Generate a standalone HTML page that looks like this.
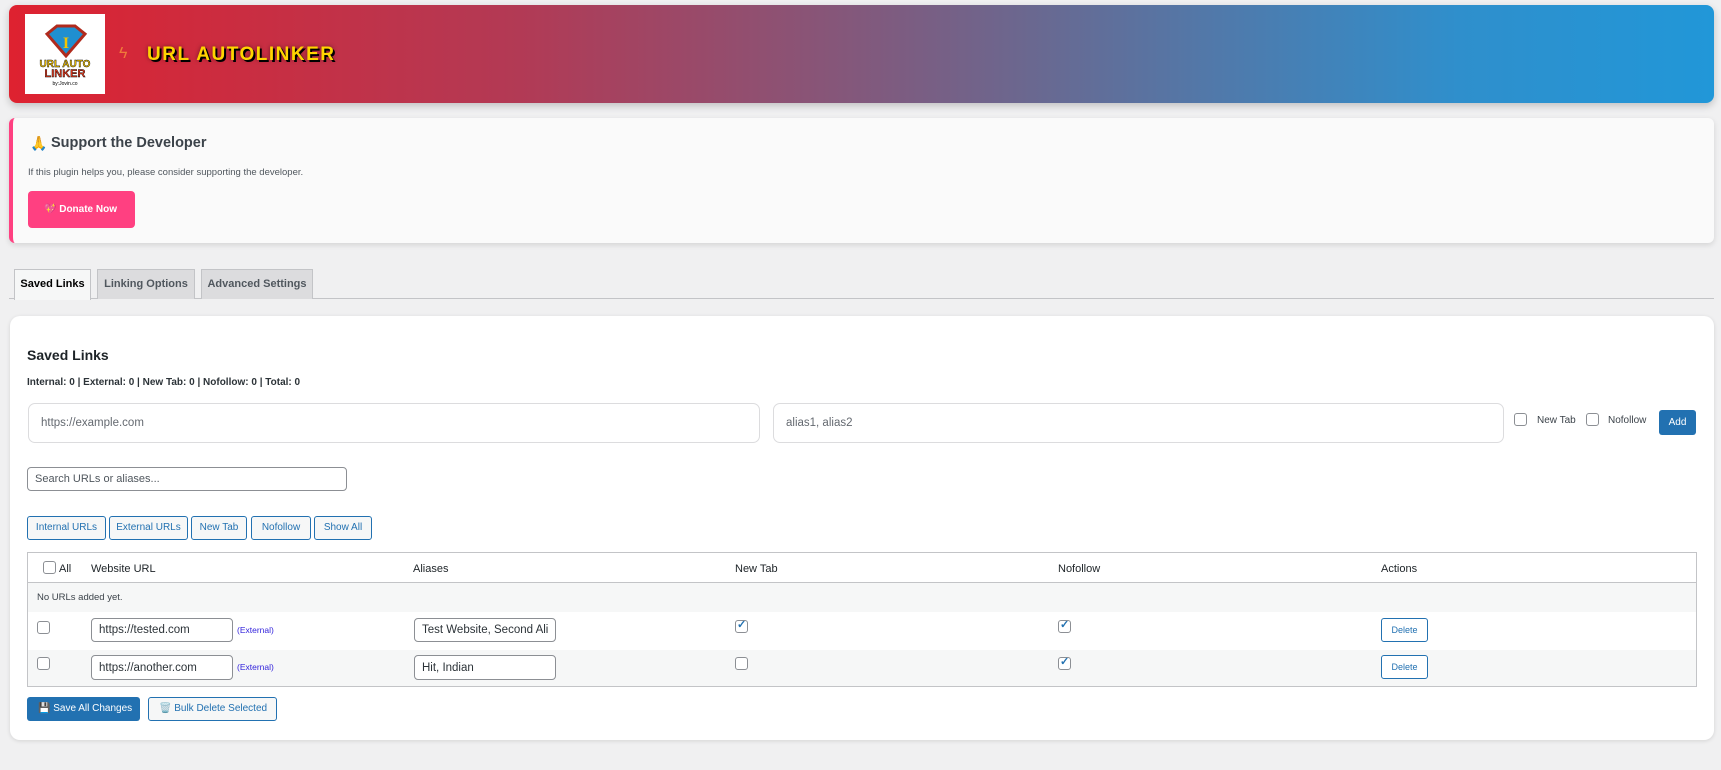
<!DOCTYPE html>
<html><head><meta charset="utf-8"><style>
*{box-sizing:border-box;margin:0;padding:0}
body{width:1721px;height:770px;background:#f0f0f1;font-family:"Liberation Sans",sans-serif;color:#1d2327;position:relative;overflow:hidden;font-size:11px}
.abs{position:absolute}
.hdr{left:9px;top:5px;width:1705px;height:98px;border-radius:8px;background:linear-gradient(90deg,#de2230 0%,#b23a55 30%,#6a6890 60%,#2f8fcc 85%,#2197d8 100%);box-shadow:0 3px 8px rgba(0,0,0,.2)}
.logo{left:25px;top:14px;width:80px;height:80px;background:#fff}
.title{left:147px;top:44px;font-size:19px;font-weight:900;color:#ffd400;letter-spacing:1.5px;text-shadow:2px 2px 0 #000,0 0 4px rgba(0,0,0,.5)}
.card{background:#fafafa;border-radius:6px;box-shadow:0 2px 6px rgba(0,0,0,.12)}
input.t{position:absolute;border:1px solid #8c8f94;border-radius:4px;background:#fff;font:11.5px "Liberation Sans",sans-serif;padding:0 7px;color:#2c3338}
.cb{position:absolute;width:13px;height:13px;border:1px solid #8c8f94;border-radius:3px;background:#fff}
.cb.on::after{content:"✓";position:absolute;left:1px;top:-3px;color:#2271b1;font-size:11px;font-weight:bold}
.fb{position:absolute;top:516px;height:24px;border:1px solid #2271b1;border-radius:3px;background:#f6f7f7;color:#2271b1;font-size:10px;text-align:center;line-height:22px}
.th{position:absolute;top:563px;font-size:11px;color:#1d2327}
.ext{position:absolute;font-size:8.5px;color:#2f1fdb}
.del{position:absolute;left:1381px;width:47px;height:24px;border:1px solid #2271b1;border-radius:3px;background:#fff;color:#2271b1;font-size:9px;text-align:center;line-height:22px}
.tab{position:absolute;top:269px;height:30px;border:1px solid #c3c4c7;border-bottom:none;font-size:11px;font-weight:bold;line-height:28px;text-align:center}
</style></head><body>
<div class="abs hdr"></div>
<div class="abs logo">
<svg width="80" height="80" viewBox="0 0 80 80"><path d="M22 20 L32 12 H50 L60 20 L41 42 Z" fill="#1f8fd0" stroke="#b02a1d" stroke-width="3"/><text x="41" y="34" font-size="16" font-weight="900" fill="#f5c400" text-anchor="middle" font-family="Liberation Serif">I</text><text x="40" y="53" font-size="10" font-weight="900" fill="#f5c400" text-anchor="middle" stroke="#000" stroke-width=".4">URL AUTO</text><text x="40" y="63" font-size="11" font-weight="900" fill="#e63a1e" text-anchor="middle" stroke="#000" stroke-width=".4">LINKER</text><text x="40" y="71" font-size="5" fill="#000" text-anchor="middle">by:Jovin.co</text></svg>
</div>
<div class="abs" style="left:119px;top:45px;font-size:16px;color:#f07a3a">ϟ</div>
<div class="abs title">URL AUTOLINKER</div>

<div class="abs card" style="left:9px;top:118px;width:1705px;height:125px;border-left:4px solid #ff4081"></div>
<div class="abs" style="left:30px;top:135px;font-size:14px">🙏</div>
<div class="abs" style="left:51px;top:135px;font-size:14.5px;color:#3c434a;font-weight:600">Support the Developer</div>
<div class="abs" style="left:28px;top:167px;font-size:9.5px;color:#50575e">If this plugin helps you, please consider supporting the developer.</div>
<div class="abs" style="left:28px;top:191px;width:107px;height:37px;background:#ff4081;border-radius:4px;color:#fff;font-size:10px;font-weight:bold;line-height:37px;padding-left:16px">💖 Donate Now</div>

<div class="abs" style="left:9px;top:298px;width:1705px;height:1px;background:#c3c4c7"></div>
<div class="tab" style="left:14px;width:77px;background:#f6f7f7;height:31px;color:#000">Saved Links</div>
<div class="tab" style="left:97px;width:98px;background:#dcdcde;color:#50575e">Linking Options</div>
<div class="tab" style="left:201px;width:112px;background:#dcdcde;color:#50575e">Advanced Settings</div>

<div class="abs" style="left:10px;top:316px;width:1704px;height:424px;background:#fff;border-radius:10px;box-shadow:0 1px 4px rgba(0,0,0,.12)"></div>
<div class="abs" style="left:27px;top:347px;font-size:14px;font-weight:600">Saved Links</div>
<div class="abs" style="left:27px;top:377px;font-size:10px;font-weight:600;color:#2c3338">Internal: 0 | External: 0 | New Tab: 0 | Nofollow: 0 | Total: 0</div>
<input class="t" style="left:28px;top:403px;width:732px;height:40px;border-color:#dcdcde;border-radius:7px;padding-left:12px;color:#646970" value="https://example.com">
<input class="t" style="left:773px;top:403px;width:731px;height:40px;border-color:#dcdcde;border-radius:7px;padding-left:12px;color:#646970" value="alias1, alias2">
<div class="cb" style="left:1514px;top:413px"></div>
<div class="abs" style="left:1537px;top:415px;font-size:10px;color:#3c434a">New Tab</div>
<div class="cb" style="left:1586px;top:413px"></div>
<div class="abs" style="left:1608px;top:415px;font-size:10px;color:#3c434a">Nofollow</div>
<div class="abs" style="left:1659px;top:410px;width:37px;height:25px;background:#2271b1;border-radius:3px;color:#fff;font-size:10px;text-align:center;line-height:25px">Add</div>
<input class="t" style="left:27px;top:467px;width:320px;height:24px;font-size:11px;color:#50575e" value="Search URLs or aliases...">

<div class="fb" style="left:27px;width:79px">Internal URLs</div>
<div class="fb" style="left:109px;width:79px">External URLs</div>
<div class="fb" style="left:191px;width:56px">New Tab</div>
<div class="fb" style="left:251px;width:60px">Nofollow</div>
<div class="fb" style="left:314px;width:58px">Show All</div>

<div class="abs" style="left:27px;top:552px;width:1670px;height:135px;border:1px solid #c3c4c7;background:#fff"></div>
<div class="abs" style="left:28px;top:582px;width:1668px;height:1px;background:#c3c4c7"></div>
<div class="abs" style="left:28px;top:583px;width:1668px;height:29px;background:#f6f7f7"></div>
<div class="abs" style="left:28px;top:650px;width:1668px;height:36px;background:#f6f7f7"></div>
<div class="cb" style="left:43px;top:561px"></div>
<div class="th" style="left:59px">All</div>
<div class="th" style="left:91px">Website URL</div>
<div class="th" style="left:413px">Aliases</div>
<div class="th" style="left:735px">New Tab</div>
<div class="th" style="left:1058px">Nofollow</div>
<div class="th" style="left:1381px">Actions</div>
<div class="abs" style="left:37px;top:592px;font-size:9.5px;color:#3c434a">No URLs added yet.</div>

<div class="cb" style="left:37px;top:621px"></div>
<input class="t" style="left:91px;top:618px;width:142px;height:24px" value="https://tested.com">
<div class="ext" style="left:237px;top:625px">(External)</div>
<input class="t" style="left:414px;top:618px;width:142px;height:24px" value="Test Website, Second Alias">
<div class="cb on" style="left:735px;top:620px"></div>
<div class="cb on" style="left:1058px;top:620px"></div>
<div class="del" style="top:618px">Delete</div>

<div class="cb" style="left:37px;top:657px"></div>
<input class="t" style="left:91px;top:655px;width:142px;height:25px" value="https://another.com">
<div class="ext" style="left:237px;top:662px">(External)</div>
<input class="t" style="left:414px;top:655px;width:142px;height:25px" value="Hit, Indian">
<div class="cb" style="left:735px;top:657px"></div>
<div class="cb on" style="left:1058px;top:657px"></div>
<div class="del" style="top:655px">Delete</div>

<div class="abs" style="left:27px;top:697px;width:113px;height:24px;background:#2271b1;border-radius:3px;color:#fff;font-size:10px;line-height:24px;padding-left:11px">💾 Save All Changes</div>
<div class="abs" style="left:148px;top:697px;width:129px;height:24px;border:1px solid #2271b1;border-radius:3px;background:#f6f7f7;color:#2271b1;font-size:10px;line-height:22px;padding-left:10px">🗑️ Bulk Delete Selected</div>
</body></html>
